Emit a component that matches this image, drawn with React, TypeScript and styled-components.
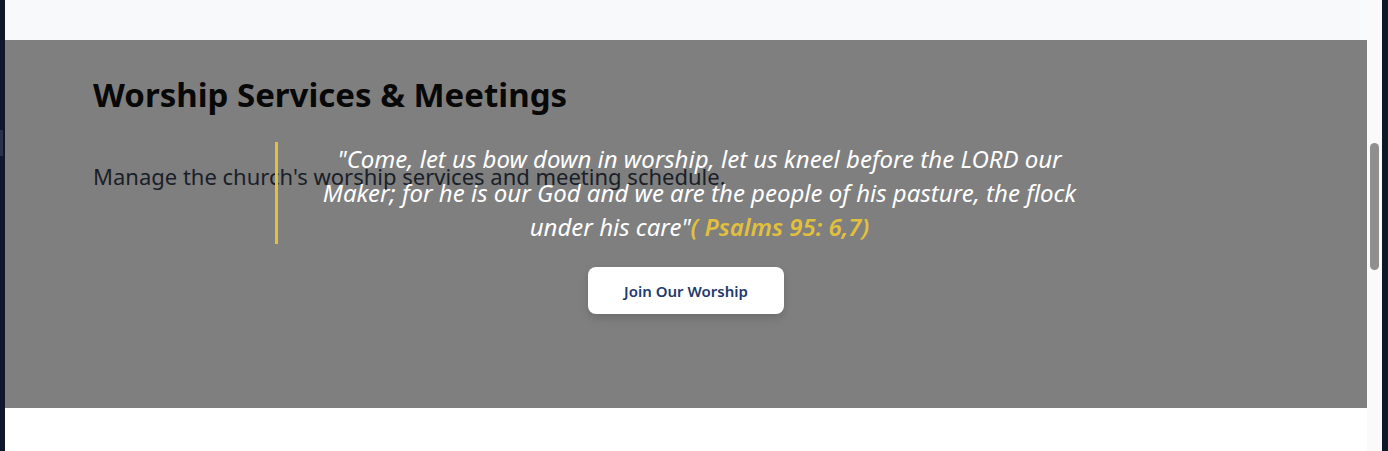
import styled, { createGlobalStyle } from "styled-components";

const GlobalStyle = createGlobalStyle`
    html, body {
        margin: 0;
        padding: 0;
        height: 100%;
        overflow: hidden;
        background: #ffffff;
    }
    #root {
        height: 100%;
    }
`;

const App = () => {
    return (
        <>
            <GlobalStyle />
            <Shell>
                <SideEdge>
                    <SideMark />
                </SideEdge>
                <Main>
                    <TopBar />
                    <Section>
                        <SectionTitle>Worship Services &amp; Meetings</SectionTitle>
                        <SectionText>
                            Manage the church's worship services and meeting schedule.
                        </SectionText>
                        <Overlay>
                            <QuoteBox>
                                <Quote>
                                    "Come, let us bow down in worship, let us kneel before the LORD our
                                    Maker; for he is our God and we are the people of his pasture, the flock
                                    under his care"<Verse>( Psalms 95: 6,7)</Verse>
                                </Quote>
                            </QuoteBox>
                            <JoinButton type="button">Join Our Worship</JoinButton>
                        </Overlay>
                    </Section>
                    <Rest />
                </Main>
                <ScrollTrack>
                    <ScrollThumb />
                </ScrollTrack>
                <RightEdge />
            </Shell>
        </>
    );
};

const Shell = styled.div`
    display: flex;
    width: 1388px;
    height: 451px;
    font-family: "Noto Sans", "Open Sans", sans-serif;
`;

const SideEdge = styled.div`
    width: 5px;
    background: #0f172a;
    padding-top: 130px;
    box-sizing: border-box;
`;

const SideMark = styled.div`
    width: 3px;
    height: 26px;
    background: #2a3346;
`;

const Main = styled.div`
    flex: 1;
    display: flex;
    flex-direction: column;
    min-width: 0;
`;

const TopBar = styled.div`
    height: 40px;
    background: #f8f9fb;
`;

const Section = styled.section`
    position: relative;
    height: 368px;
    box-sizing: border-box;
    padding: 33px 88px 0;
    background: #ffffff;
`;

const SectionTitle = styled.h1`
    margin: 0;
    font-size: 33px;
    font-weight: 700;
    color: #111111;
    line-height: 44px;
`;

const SectionText = styled.p`
    margin: 44px 0 0;
    font-size: 22px;
    color: #374151;
    line-height: 30px;
`;

const Overlay = styled.div`
    position: absolute;
    inset: 0;
    background: rgba(0, 0, 0, 0.5);
    display: flex;
    flex-direction: column;
    align-items: center;
    padding-top: 102px;
`;

const QuoteBox = styled.div`
    width: 822px;
    border-left: 3px solid #e2c03c;
    padding-left: 24px;
    box-sizing: border-box;
    display: flex;
    justify-content: center;
`;

const Quote = styled.p`
    margin: 0;
    max-width: 775px;
    font-size: 24px;
    font-style: italic;
    line-height: 34px;
    color: #ffffff;
    text-align: center;
`;

const Verse = styled.span`
    color: #e2c03c;
    font-weight: 600;
`;

const JoinButton = styled.button`
    margin-top: 23px;
    width: 196px;
    height: 47px;
    border: 0;
    border-radius: 8px;
    background: #ffffff;
    color: #1e3a6e;
    font-family: inherit;
    font-size: 15px;
    font-weight: 600;
    box-shadow: 0 4px 10px rgba(0, 0, 0, 0.15);
    cursor: pointer;
`;

const Rest = styled.div`
    flex: 1;
    background: #ffffff;
`;

const ScrollTrack = styled.div`
    width: 15px;
    background: #fafafa;
    padding: 143px 3px 0;
    box-sizing: border-box;
`;

const ScrollThumb = styled.div`
    width: 9px;
    height: 127px;
    border-radius: 5px;
    background: #8f8f8f;
`;

const RightEdge = styled.div`
    width: 6px;
    background: #0f172a;
`;

export default App;
